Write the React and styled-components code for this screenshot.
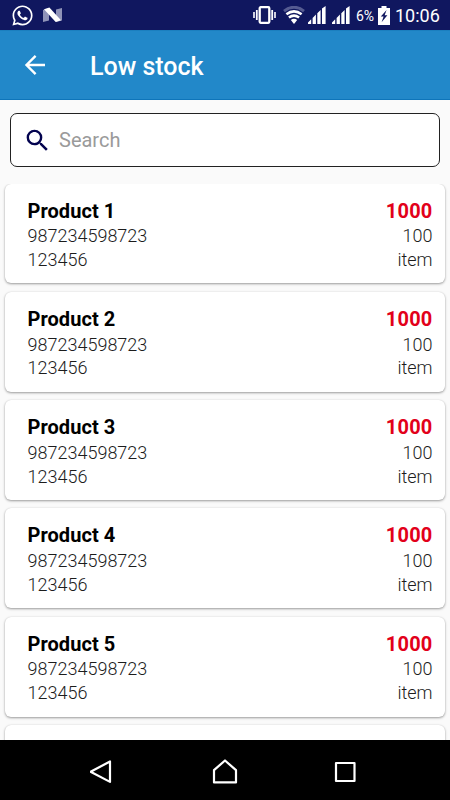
import React from 'react';
import styled, { createGlobalStyle } from 'styled-components';
import { FaWhatsapp } from 'react-icons/fa';

const GlobalStyle = createGlobalStyle`
  * { box-sizing: border-box; }
  body { margin: 0; background: #fafafa; font-family: Roboto, sans-serif; }
`;

const Screen = styled.div`
  width: 450px;
  height: 800px;
  display: flex;
  flex-direction: column;
  overflow: hidden;
  background: #fafafa;
`;

const StatusBar = styled.div`
  height: 30px;
  flex: none;
  display: flex;
  align-items: center;
  padding: 0 10px 0 11px;
  background: #10175f;
  color: #fff;
  svg { display: block; flex: none; }
`;

const Notifications = styled.div`
  display: flex;
  align-items: center;
  gap: 9px;
  flex: 1;
`;

const Indicators = styled.div`
  display: flex;
  align-items: center;
`;

const Slot = styled.div`
  margin-right: ${(p) => p.$gap}px;
`;

const Percent = styled.span`
  width: 19px;
  margin-right: 3px;
  font-size: 14px;
  line-height: 20px;
  letter-spacing: -0.2px;
  white-space: nowrap;
  padding-top: 2px;
`;

const Clock = styled.span`
  width: 45px;
  font-size: 18px;
  line-height: 20px;
  white-space: nowrap;
  padding-top: 2px;
`;

const AppBar = styled.header`
  height: 70px;
  flex: none;
  display: flex;
  align-items: center;
  padding: 0 20px;
  background: #2288c9;
  border-top: 1px solid #1b7fbf;
  border-bottom: 1px solid #0e75ba;
`;

const BackButton = styled.button`
  width: 30px;
  height: 30px;
  padding: 0;
  border: 0;
  background: none;
`;

const Title = styled.h1`
  margin: 3px 0 0 40px;
  font-size: 25px;
  line-height: 30px;
  font-weight: 500;
  color: #fff;
`;

const SearchBox = styled.label`
  height: 54px;
  flex: none;
  margin: 13px 10px 16.5px;
  padding-left: 12px;
  display: flex;
  align-items: center;
  background: #fff;
  border: 1px solid #222;
  border-radius: 7px;
`;

const SearchInput = styled.input`
  flex: 1;
  min-width: 0;
  height: 40px;
  margin-left: 7px;
  padding: 0;
  border: 0;
  outline: 0;
  background: none;
  font: 400 20px/40px Roboto, sans-serif;
  color: #222;
  &::placeholder { color: #9a9a9a; opacity: 1; }
`;

const List = styled.main`
  flex: 1;
  min-height: 0;
  overflow: hidden;
  display: flex;
  flex-direction: column;
  gap: 8.4px;
  padding: 0 5px;
`;

const Card = styled.article`
  flex: none;
  height: 99.9px;
  padding: 14px 12.5px 0 22.5px;
  display: flex;
  justify-content: space-between;
  background: #fff;
  border-radius: 6px;
  box-shadow: 0 1px 2.5px rgba(0, 0, 0, 0.38), 0 0 1px rgba(0, 0, 0, 0.12);
`;

const Column = styled.div`
  display: flex;
  flex-direction: column;
  text-align: ${(p) => p.$align || 'left'};
`;

const Heading = styled.strong`
  height: 26.8px;
  font-size: 20px;
  line-height: 27px;
  font-weight: 700;
  letter-spacing: ${(p) => (p.$alert ? '0.2px' : '0.05px')};
  color: ${(p) => (p.$alert ? '#e2001a' : '#000')};
`;

const Detail = styled.span`
  height: 23.8px;
  font-size: 18px;
  line-height: 23.8px;
  font-weight: 300;
  color: #1c1c1c;
`;

const NavBar = styled.nav`
  height: 60px;
  flex: none;
  display: grid;
  grid-template-columns: repeat(3, 120px);
  justify-content: center;
  align-items: center;
  justify-items: center;
  padding-top: 3px;
  background: #000;
`;

const NavButton = styled.button`
  width: 30px;
  height: 30px;
  padding: 0;
  border: 0;
  background: none;
  svg { display: block; }
`;

const Signal = () => (
  <svg width="18" height="18" viewBox="0 0 18 18" fill="#fff">
    <path d="M0 18v-1.4L3.2 13.3V18zM4.6 18v-6l3.3-3.4V18zM9.3 18V7.3L12.6 4v14zM14 18V2.5L17.6 0v18z" />
  </svg>
);

const NougatIcon = () => (
  <svg width="20" height="16" viewBox="0 0 20 16">
    <path d="M0 3 6 1v12.5L0 15zM13 2.4 19 1v12.5l-6 1.5z" fill="#8f93b8" />
    <path d="M1 2.2 6.4.6 18 13.3 12.7 15z" fill="#fff" />
  </svg>
);

const VibrateIcon = () => (
  <svg width="23" height="18" viewBox="0 0 23 18" fill="none" stroke="#fff">
    <rect x="6.7" y="1.2" width="9.6" height="15.6" rx="1" strokeWidth="2.3" />
    <path d="M3.8 4v10M19.2 4v10" strokeWidth="1.8" />
    <path d="M1 6v6M22 6v6" strokeWidth="1.6" />
  </svg>
);

const WifiIcon = () => (
  <svg width="22" height="18" viewBox="0 0 22 18" fill="none">
    <path d="M1 5.1Q11-2.5 21 5.1" stroke="#555b91" strokeWidth="3" />
    <path d="M3.4 8.3Q11 2.6 18.6 8.3" stroke="#fff" strokeWidth="2.6" />
    <path d="M5.9 11.5Q11 7.8 16.1 11.5" stroke="#fff" strokeWidth="2.6" />
    <path d="M7.8 14Q11 11.7 14.2 14L11 18z" fill="#fff" />
  </svg>
);

const BatteryIcon = () => (
  <svg width="12" height="19" viewBox="0 0 12 19">
    <path d="M3.5 0h5v2H12v17H0V2h3.5z" fill="#fff" />
    <path d="M8.6 4 2.8 10.6h2.8L3.6 16.2l5.8-7H6.6z" fill="#10175f" />
  </svg>
);

const products = [1, 2, 3, 4, 5].map((n) => ({
  name: `Product ${n}`,
  barcode: '987234598723',
  code: '123456',
  stock: '1000',
  minimum: '100',
  unit: 'item',
}));

function ProductCard({ product }) {
  return (
    <Card>
      <Column>
        <Heading>{product.name}</Heading>
        <Detail>{product.barcode}</Detail>
        <Detail>{product.code}</Detail>
      </Column>
      <Column $align="right">
        <Heading $alert>{product.stock}</Heading>
        <Detail>{product.minimum}</Detail>
        <Detail>{product.unit}</Detail>
      </Column>
    </Card>
  );
}

export default function App() {
  return (
    <Screen>
      <GlobalStyle />
      <StatusBar>
        <Notifications>
          <FaWhatsapp size={23} />
          <NougatIcon />
        </Notifications>
        <Indicators>
          <Slot $gap={7}><VibrateIcon /></Slot>
          <Slot $gap={3}><WifiIcon /></Slot>
          <Slot $gap={6}><Signal /></Slot>
          <Slot $gap={6}><Signal /></Slot>
          <Percent>6%</Percent>
          <Slot $gap={5}><BatteryIcon /></Slot>
          <Clock>10:06</Clock>
        </Indicators>
      </StatusBar>
      <AppBar>
        <BackButton aria-label="Back">
          <svg width="30" height="30" viewBox="0 0 30 30" fill="none" stroke="#fff" strokeWidth="2.4">
            <path d="M25 15H7M15.6 5.9 6.5 15l9.1 9.1" />
          </svg>
        </BackButton>
        <Title>Low stock</Title>
      </AppBar>
      <SearchBox>
        <svg width="29" height="29" viewBox="0 0 24 24" fill="#03034f">
          <path d="M15.5 14h-.79l-.28-.27A6.47 6.47 0 0 0 16 9.5 6.5 6.5 0 1 0 9.5 16c1.61 0 3.09-.59 4.23-1.57l.27.28v.79l5 4.99L20.49 19zm-6 0C7.01 14 5 11.99 5 9.5S7.01 5 9.5 5 14 7.01 14 9.5 11.99 14 9.5 14z" />
        </svg>
        <SearchInput placeholder="Search" />
      </SearchBox>
      <List>
        {products.map((p) => <ProductCard key={p.name} product={p} />)}
        <Card />
      </List>
      <NavBar>
        <NavButton aria-label="Back">
          <svg width="30" height="30" viewBox="0 0 30 30" fill="none" stroke="#fff" strokeWidth="2.2" strokeLinejoin="round">
            <path d="M20 4.5v20.4L.6 14.7z" />
          </svg>
        </NavButton>
        <NavButton aria-label="Home">
          <svg width="30" height="30" viewBox="0 0 30 30" fill="none" stroke="#fff" strokeWidth="2.2" strokeLinejoin="round">
            <path d="M4 13.2 15 3.5l11 9.7v12.2H4z" />
          </svg>
        </NavButton>
        <NavButton aria-label="Recent apps">
          <svg width="30" height="30" viewBox="0 0 30 30" fill="none" stroke="#fff" strokeWidth="2.2" strokeLinejoin="round">
            <path d="M6 6h18.5v18H6z" />
          </svg>
        </NavButton>
      </NavBar>
    </Screen>
  );
}
